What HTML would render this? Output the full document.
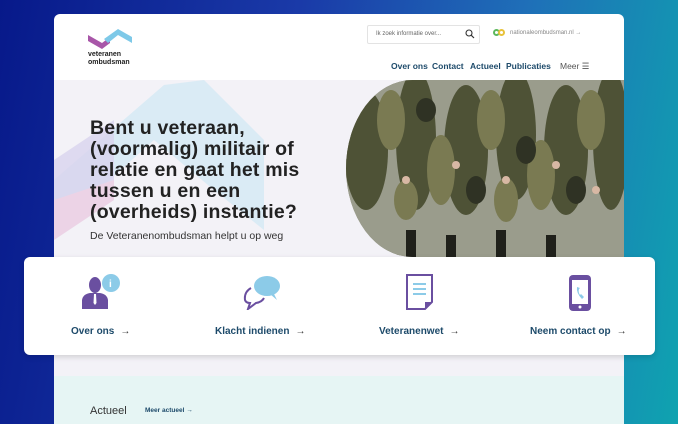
<!DOCTYPE html>
<html style="background:#0a2a9a"><head><meta charset="utf-8"><style>
*{margin:0;padding:0;box-sizing:border-box}
html,body{width:678px;height:424px;overflow:hidden}
body{position:relative;font-family:"Liberation Sans",sans-serif;background:linear-gradient(100deg,#07198a 0%,#1a3aa8 40%,#1f6fb8 70%,#0fa3b0 100%)}
.page{position:absolute;left:54px;top:14px;width:570px;height:410px;background:#fff;border-radius:6px 6px 0 0;overflow:hidden}
.hero{position:absolute;left:0;top:66px;width:570px;height:300px;background:#f3f2f7}
.teal{position:absolute;left:0;top:362px;width:570px;height:60px;background:#e6f5f4}
.photo{position:absolute;left:292px;top:66px;width:278px;height:177px;overflow:hidden;border-radius:120px 0 0 120px/ 160px 0 0 160px;background:#8b8e7a}
h1{position:absolute;left:36px;top:104px;font-size:19.5px;line-height:21px;color:#222;font-weight:bold;letter-spacing:0.2px}
.sub{position:absolute;left:36px;top:216px;font-size:10.5px;color:#333}
.card{position:absolute;left:24px;top:257px;width:631px;height:98px;background:#fff;border-radius:6px;box-shadow:0 2px 6px rgba(0,0,0,.15)}
.it{position:absolute;top:69px;font-size:10px;font-weight:bold;color:#1d4a6a}
.it span{font-weight:normal;margin-left:6px;color:#333}
.nav{position:absolute;top:47px;font-size:8.5px;font-weight:bold;color:#1d4a6a}
</style></head><body>
<div class="page">
<svg style="position:absolute;left:34px;top:15px" width="44" height="20" viewBox="0 0 44 20"><path d="M0 6 L14 14 L22 8 L22 14 L14 20 L0 12Z" fill="#a856a8"/><path d="M16 10 L30 0 L44 8 L44 14 L30 6 L20 14Z" fill="#7ec9e8"/></svg>
<div style="position:absolute;left:34px;top:37px;font-size:7px;font-weight:bold;line-height:7.5px;color:#222">veteranen<br>ombudsman</div>
<div style="position:absolute;left:313px;top:11px;width:113px;height:19px;border:1px solid #e3e3e3;border-radius:2px;font-size:6px;color:#666;padding:5px 0 0 8px">Ik zoek informatie over...</div>
<svg style="position:absolute;left:411px;top:15px" width="10" height="10"><circle cx="4" cy="4" r="3" fill="none" stroke="#333" stroke-width="1.1"/><path d="M6.3 6.3 L9 9" stroke="#333" stroke-width="1.2"/></svg>
<div style="position:absolute;left:439px;top:15px;width:7px;height:7px;border-radius:50%;border:2px solid #5cb85c"></div>
<div style="position:absolute;left:444px;top:15px;width:7px;height:7px;border-radius:50%;border:2px solid #e8c23a"></div>
<div style="position:absolute;left:456px;top:16px;font-size:6px;color:#888">nationaleombudsman.nl →</div>
<div class="nav" style="left:337px">Over ons</div>
<div class="nav" style="left:378px">Contact</div>
<div class="nav" style="left:416px">Actueel</div>
<div class="nav" style="left:452px">Publicaties</div>
<div class="nav" style="left:506px;font-weight:normal;color:#555">Meer ☰</div>
<div class="hero">
<svg style="position:absolute;left:0;top:0" width="240" height="180"><path d="M0 100 L110 5 L150 0 L210 60 L210 150 L160 110 L100 60 L0 150Z" fill="#d3e9f4" opacity=".8"/><path d="M0 80 L60 40 L60 110 L0 150Z" fill="#d8d3ee" opacity=".8"/><path d="M0 120 L60 100 L60 120 L0 160Z" fill="#ecd3e6"/></svg>
</div>
<div class="photo">
<svg width="278" height="177">
<rect width="278" height="177" fill="#9a9c8c"/>
<g fill="#4e5236"><ellipse cx="20" cy="70" rx="22" ry="60"/><ellipse cx="70" cy="60" rx="20" ry="70"/><ellipse cx="120" cy="70" rx="22" ry="65"/><ellipse cx="170" cy="55" rx="20" ry="65"/><ellipse cx="220" cy="70" rx="22" ry="65"/><ellipse cx="265" cy="60" rx="18" ry="70"/></g>
<g fill="#7a7a52"><ellipse cx="45" cy="40" rx="14" ry="30"/><ellipse cx="95" cy="90" rx="14" ry="35"/><ellipse cx="145" cy="40" rx="14" ry="30"/><ellipse cx="195" cy="95" rx="14" ry="35"/><ellipse cx="245" cy="40" rx="14" ry="30"/><ellipse cx="60" cy="120" rx="12" ry="20"/><ellipse cx="160" cy="120" rx="12" ry="22"/></g>
<g fill="#2f3224"><ellipse cx="80" cy="30" rx="10" ry="12"/><ellipse cx="180" cy="70" rx="10" ry="14"/><ellipse cx="230" cy="110" rx="10" ry="14"/><ellipse cx="130" cy="110" rx="10" ry="14"/></g>
<g fill="#d8b8a4"><circle cx="60" cy="100" r="4"/><circle cx="110" cy="85" r="4"/><circle cx="160" cy="100" r="4"/><circle cx="210" cy="85" r="4"/><circle cx="250" cy="110" r="4"/></g>
<g fill="#1f201a"><rect x="60" y="150" width="10" height="27"/><rect x="100" y="155" width="10" height="22"/><rect x="150" y="150" width="10" height="27"/><rect x="200" y="155" width="10" height="22"/></g>
</svg>
</div>
<h1>Bent u veteraan,<br>(voormalig) militair of<br>relatie en gaat het mis<br>tussen u en een<br>(overheids) instantie?</h1>
<div class="sub">De Veteranenombudsman helpt u op weg</div>
<div class="teal"></div>
<div style="position:absolute;left:36px;top:391px;font-size:11px;color:#333">Actueel</div>
<div style="position:absolute;left:91px;top:393px;font-size:6.5px;font-weight:bold;color:#1d4a6a">Meer actueel <span style="font-weight:normal">→</span></div>
</div>
<div class="card">
<svg style="position:absolute;left:56px;top:16px" width="42" height="38"><circle cx="31" cy="10" r="9" fill="#8ccbe8"/><text x="29" y="14" font-size="10" fill="#fff" font-family="Liberation Sans" font-weight="bold">i</text><ellipse cx="15" cy="12" rx="6" ry="8" fill="#6a4fa0"/><path d="M2 36 L2 27 Q3 21 10 20 L20 20 Q27 21 28 27 L28 36Z" fill="#6a4fa0"/><path d="M14 21 L16 21 L16.5 30 L15 32 L13.5 30Z" fill="#fff"/></svg>
<svg style="position:absolute;left:218px;top:17px" width="40" height="36"><path d="M9 14 Q2 18 3 26 Q4 29 8 29 L6 35 L14 29 Q20 28 22 24" fill="none" stroke="#6a4fa0" stroke-width="2"/><ellipse cx="25" cy="12" rx="13" ry="10" fill="#8ccbe8"/><path d="M28 20 L35 26 L31 18Z" fill="#8ccbe8"/></svg>
<svg style="position:absolute;left:382px;top:17px" width="28" height="36"><path d="M1 1 L26 1 L26 28 L19 35 L1 35Z" fill="#fff" stroke="#6a4fa0" stroke-width="2"/><path d="M19 35 L19 28 L26 28" fill="#6a4fa0"/><g stroke="#8ccbe8" stroke-width="2"><path d="M7 10 H20M7 15 H20M7 20 H20"/></g></svg>
<svg style="position:absolute;left:544px;top:18px" width="24" height="36"><rect x="1" y="0" width="22" height="36" rx="4" fill="#6a4fa0"/><rect x="4" y="5" width="16" height="24" fill="#fff"/><circle cx="12" cy="32" r="1.5" fill="#fff"/><path d="M9 12 Q8 18 14 24 L16 22 L13 19 L12 20 Q10 17 11 14 L12 13 Z" fill="#8ccbe8"/></svg>
<div class="it" style="left:47px">Over ons<span>→</span></div>
<div class="it" style="left:191px">Klacht indienen<span>→</span></div>
<div class="it" style="left:355px">Veteranenwet<span>→</span></div>
<div class="it" style="left:506px">Neem contact op<span>→</span></div>
</div>
</body></html>
